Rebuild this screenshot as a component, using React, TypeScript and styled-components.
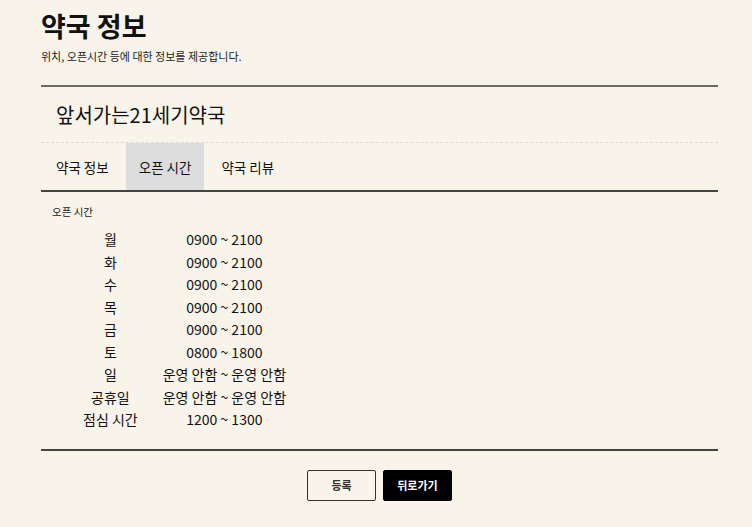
import React from "react";
import styled, { createGlobalStyle } from "styled-components";

const Global = createGlobalStyle`
  html, body { margin: 0; padding: 0; background: #f8f4ea; }
  body { font-family: "Noto Sans CJK KR", "Noto Sans", sans-serif; color: #111; }
`;

const Page = styled.div`
  width: 677px;
  margin-left: 41px;
  padding-top: 6px;
`;

const Header = styled.header`
  display: flex;
  flex-direction: column;
  gap: 2px;
  padding-bottom: 21px;
  border-bottom: 2px solid #6b6b66;
`;

const Title = styled.h1`
  margin: 0;
  font-size: 27px;
  font-weight: 700;
  line-height: 40px;
`;

const Subtitle = styled.p`
  margin: 0;
  font-size: 11px;
  line-height: 16px;
  color: #222;
`;

const StoreName = styled.h2`
  margin: 0;
  padding: 0 15px;
  height: 55px;
  display: flex;
  align-items: center;
  font-size: 20px;
  font-weight: 400;
  border-bottom: 1px dashed #dedbd3;
`;

const Tabs = styled.nav`
  display: flex;
  gap: 4px;
  padding-left: 2px;
  height: 47px;
  border-bottom: 2px solid #444;
`;

const Tab = styled.div<{ $active?: boolean }>`
  display: flex;
  align-items: center;
  padding: 0 13px;
  font-size: 13.5px;
  background: ${(p) => (p.$active ? "#dcdcdc" : "transparent")};
  color: #111;
`;

const Content = styled.section`
  padding: 12px 11px 18px;
  border-bottom: 2px solid #444;
`;

const Label = styled.div`
  font-size: 10.5px;
  line-height: 16px;
  color: #222;
`;

const Schedule = styled.div`
  margin-top: 8px;
  margin-left: 31px;
  display: inline-grid;
  grid-template-columns: auto auto;
  column-gap: 25px;
  justify-items: center;
  font-size: 14px;
  line-height: 22.5px;
`;

const Cell = styled.div``;

const Actions = styled.div`
  display: flex;
  justify-content: center;
  gap: 7px;
  padding-top: 19px;
`;

const Button = styled.button<{ $dark?: boolean }>`
  width: 69px;
  height: 31px;
  border-radius: 2px;
  border: 1px solid ${(p) => (p.$dark ? "#000" : "#333")};
  background: ${(p) => (p.$dark ? "#000" : "transparent")};
  color: ${(p) => (p.$dark ? "#fff" : "#333")};
  font-family: "Noto Sans CJK KR", sans-serif;
  font-size: 11px;
  font-weight: 700;
  cursor: pointer;
`;

const rows: [string, string][] = [
  ["월", "0900 ~ 2100"],
  ["화", "0900 ~ 2100"],
  ["수", "0900 ~ 2100"],
  ["목", "0900 ~ 2100"],
  ["금", "0900 ~ 2100"],
  ["토", "0800 ~ 1800"],
  ["일", "운영 안함 ~ 운영 안함"],
  ["공휴일", "운영 안함 ~ 운영 안함"],
  ["점심 시간", "1200 ~ 1300"],
];

export default function App() {
  return (
    <>
      <Global />
      <Page>
        <Header>
          <Title>약국 정보</Title>
          <Subtitle>위치, 오픈시간 등에 대한 정보를 제공합니다.</Subtitle>
        </Header>
        <StoreName>앞서가는21세기약국</StoreName>
        <Tabs>
          <Tab>약국 정보</Tab>
          <Tab $active>오픈 시간</Tab>
          <Tab>약국 리뷰</Tab>
        </Tabs>
        <Content>
          <Label>오픈 시간</Label>
          <Schedule>
            {rows.map(([d, t]) => (
              <React.Fragment key={d}>
                <Cell>{d}</Cell>
                <Cell>{t}</Cell>
              </React.Fragment>
            ))}
          </Schedule>
        </Content>
        <Actions>
          <Button>등록</Button>
          <Button $dark>뒤로가기</Button>
        </Actions>
      </Page>
    </>
  );
}
